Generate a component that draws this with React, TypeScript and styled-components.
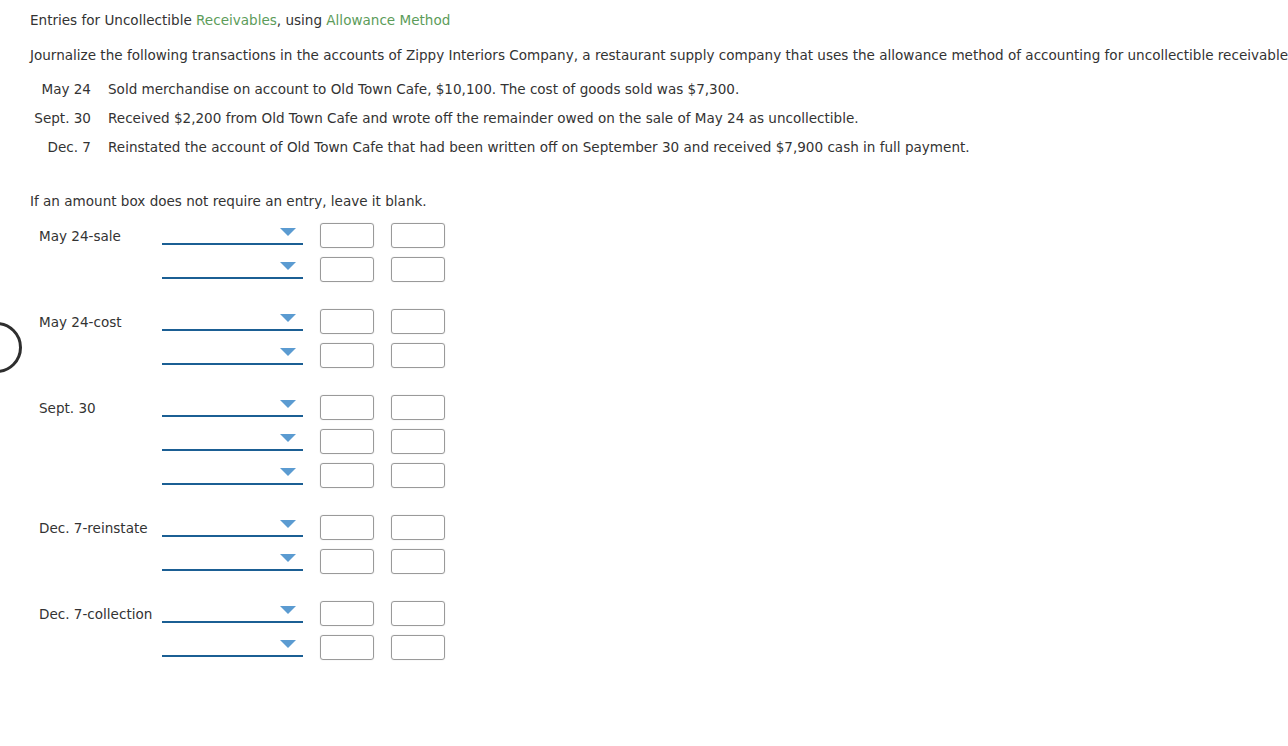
import React from "react";
import styled, { createGlobalStyle } from "styled-components";

const Global = createGlobalStyle`
  html, body { margin: 0; padding: 0; background: #fff; }
  body { font-family: "DejaVu Sans", Verdana, sans-serif; color: #333; overflow: hidden; }
`;

const Page = styled.div`
  position: relative;
  width: 1288px;
  height: 746px;
  overflow: hidden;
`;

const Content = styled.div`
  padding: 11px 0 0 30px;
  font-size: 13.55px;
  white-space: nowrap;
`;

const Title = styled.div`
  line-height: 18px;
  margin-bottom: 17px;
`;

const Green = styled.span`
  color: #5c9c5a;
`;

const Para = styled.div`
  line-height: 18px;
`;

const TxTable = styled.div`
  display: grid;
  grid-template-columns: 61px auto;
  column-gap: 17px;
  row-gap: 11px;
  margin-top: 16px;
  line-height: 18px;
`;

const TxDate = styled.div`
  text-align: right;
`;

const Note = styled.div`
  margin-top: 36px;
  line-height: 18px;
`;

const Journal = styled.div`
  margin-top: 13px;
  display: flex;
  flex-direction: column;
  gap: 27px;
`;

const Group = styled.div`
  display: grid;
  grid-template-columns: 123px 141px auto;
  row-gap: 9px;
  padding-left: 9px;
`;

const Label = styled.div`
  line-height: 18px;
  padding-top: 4px;
`;

const SelectBox = styled.div`
  position: relative;
  width: 141px;
  height: 19px;
  border-bottom: 2px solid #1b5f94;
  margin-top: 1px;
`;

const Caret = styled.div`
  position: absolute;
  right: 7px;
  top: 4px;
  width: 0;
  height: 0;
  border-left: 8.5px solid transparent;
  border-right: 8.5px solid transparent;
  border-top: 8px solid #5b9bd1;
`;

const Amounts = styled.div`
  display: flex;
  gap: 17px;
  padding-left: 17px;
`;

const Amount = styled.div`
  width: 52px;
  height: 23px;
  border: 1px solid #9a9a9a;
  border-radius: 3px;
  box-shadow: 0 0 1px rgba(0,0,0,0.25);
`;

const Circle = styled.div`
  position: absolute;
  left: -29px;
  top: 322px;
  width: 45px;
  height: 45px;
  border: 3px solid #2e2e2e;
  border-radius: 50%;
`;

const groups: { label: string; rows: number }[] = [
  { label: "May 24-sale", rows: 2 },
  { label: "May 24-cost", rows: 2 },
  { label: "Sept. 30", rows: 3 },
  { label: "Dec. 7-reinstate", rows: 2 },
  { label: "Dec. 7-collection", rows: 2 },
];

const tx = [
  ["May 24", "Sold merchandise on account to Old Town Cafe, $10,100. The cost of goods sold was $7,300."],
  ["Sept. 30", "Received $2,200 from Old Town Cafe and wrote off the remainder owed on the sale of May 24 as uncollectible."],
  ["Dec. 7", "Reinstated the account of Old Town Cafe that had been written off on September 30 and received $7,900 cash in full payment."],
];

export default function App() {
  return (
    <Page>
      <Global />
      <Content>
        <Title>
          Entries for Uncollectible <Green>Receivables</Green>, using <Green>Allowance Method</Green>
        </Title>
        <Para>
          Journalize the following transactions in the accounts of Zippy Interiors Company, a restaurant supply company that uses the allowance method of accounting for uncollectible receivables:
        </Para>
        <TxTable>
          {tx.map(([d, t]) => (
            <React.Fragment key={d}>
              <TxDate>{d}</TxDate>
              <div>{t}</div>
            </React.Fragment>
          ))}
        </TxTable>
        <Note>If an amount box does not require an entry, leave it blank.</Note>
        <Journal>
          {groups.map((g) => (
            <Group key={g.label}>
              {Array.from({ length: g.rows }).map((_, i) => (
                <React.Fragment key={i}>
                  <Label>{i === 0 ? g.label : ""}</Label>
                  <SelectBox>
                    <Caret />
                  </SelectBox>
                  <Amounts>
                    <Amount />
                    <Amount />
                  </Amounts>
                </React.Fragment>
              ))}
            </Group>
          ))}
        </Journal>
      </Content>
      <Circle />
    </Page>
  );
}
